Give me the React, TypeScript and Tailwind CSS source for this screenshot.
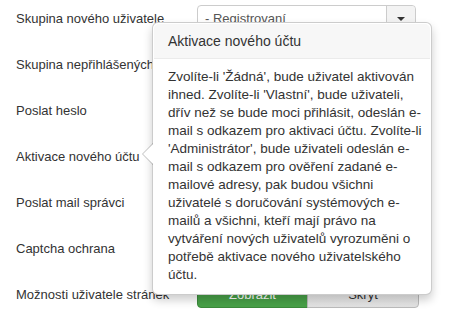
import { useState } from 'react'

const rows = [
  'Skupina nového uživatele',
  'Skupina nepřihlášených',
  'Poslat heslo',
  'Aktivace nového účtu',
  'Poslat mail správci',
  'Captcha ochrana',
  'Možnosti uživatele stránek',
]

const lines = [
  "Zvolíte-li 'Žádná', bude uživatel aktivován",
  "ihned. Zvolíte-li 'Vlastní', bude uživateli,",
  'dřív než se bude moci přihlásit, odeslán e-',
  'mail s odkazem pro aktivaci účtu. Zvolíte-li',
  "'Administrátor', bude uživateli odeslán e-",
  'mail s odkazem pro ověření zadané e-',
  'mailové adresy, pak budou všichni',
  'uživatelé s doručování systémových e-',
  'mailů a všichni, kteří mají právo na',
  'vytváření nových uživatelů vyrozuměni o',
  'potřebě aktivace nového uživatelského',
  'účtu.',
]

function Control({ index }: { index: number }) {
  const [shown, setShown] = useState(true)
  if (index === 0) {
    return (
      <div className="flex h-[28px] w-[219px] items-stretch rounded-[4px] border border-[#ccc] bg-white">
        <div className="flex flex-1 items-center pl-[7px] text-[13px] text-[#555]">- Registrovaní</div>
        <div className="flex w-[29px] items-center justify-center rounded-r-[4px] border-l border-[#ccc] bg-[#f3f3f3]">
          <span className="h-0 w-0 border-x-[4px] border-t-[4px] border-x-transparent border-t-[#333]" />
        </div>
      </div>
    )
  }
  if (index === 6) {
    return (
      <div className="flex h-[26px]">
        <button
          type="button"
          onClick={() => setShown(true)}
          className={`w-[111px] rounded-l-[4px] border text-[13px] ${shown ? 'border-[#3b8a3b] bg-[#48a148] text-white' : 'border-[#bbb] bg-[#ececec] text-[#333]'}`}
        >
          Zobrazit
        </button>
        <button
          type="button"
          onClick={() => setShown(false)}
          className={`-ml-px w-[112px] rounded-r-[4px] border text-[13px] ${!shown ? 'border-[#3b8a3b] bg-[#48a148] text-white' : 'border-[#bbb] bg-gradient-to-b from-[#f4f4f4] to-[#e2e2e2] text-[#333]'}`}
        >
          Skryt
        </button>
      </div>
    )
  }
  return <div className="h-[28px]" />
}

export default function App() {
  return (
    <div className="relative h-[316px] w-[463px] overflow-hidden bg-white font-['Liberation_Sans',Arial,sans-serif] text-[13px] text-[#333]">
      <div className="flex flex-col gap-[18px] pl-4 pt-[5px]">
        {rows.map((label, i) => (
          <div key={label} className="flex h-[28px] items-center">
            <div className="w-[181px] leading-[18px]">{label}</div>
            <Control index={i} />
          </div>
        ))}
      </div>

      <div className="absolute left-[152px] top-[22px] w-[280px] rounded-[6px] border border-black/20 bg-white p-px shadow-[0_5px_10px_rgba(0,0,0,0.2)]">
        <div className="absolute left-[-11px] top-[120px] h-0 w-0 border-y-[11px] border-r-[11px] border-y-transparent border-r-black/25" />
        <div className="absolute left-[-10px] top-[121px] h-0 w-0 border-y-[10px] border-r-[10px] border-y-transparent border-r-white" />
        <div className="rounded-t-[5px] border-b border-[#ebebeb] bg-[#f7f7f7] px-[14px] py-[8px] text-[14px] leading-[18px]">
          Aktivace nového účtu
        </div>
        <div className="px-[14px] py-[9px] text-[13.5px] leading-[18px]">
          {lines.map((l) => (
            <div key={l} className="whitespace-nowrap">{l}</div>
          ))}
        </div>
      </div>
    </div>
  )
}
